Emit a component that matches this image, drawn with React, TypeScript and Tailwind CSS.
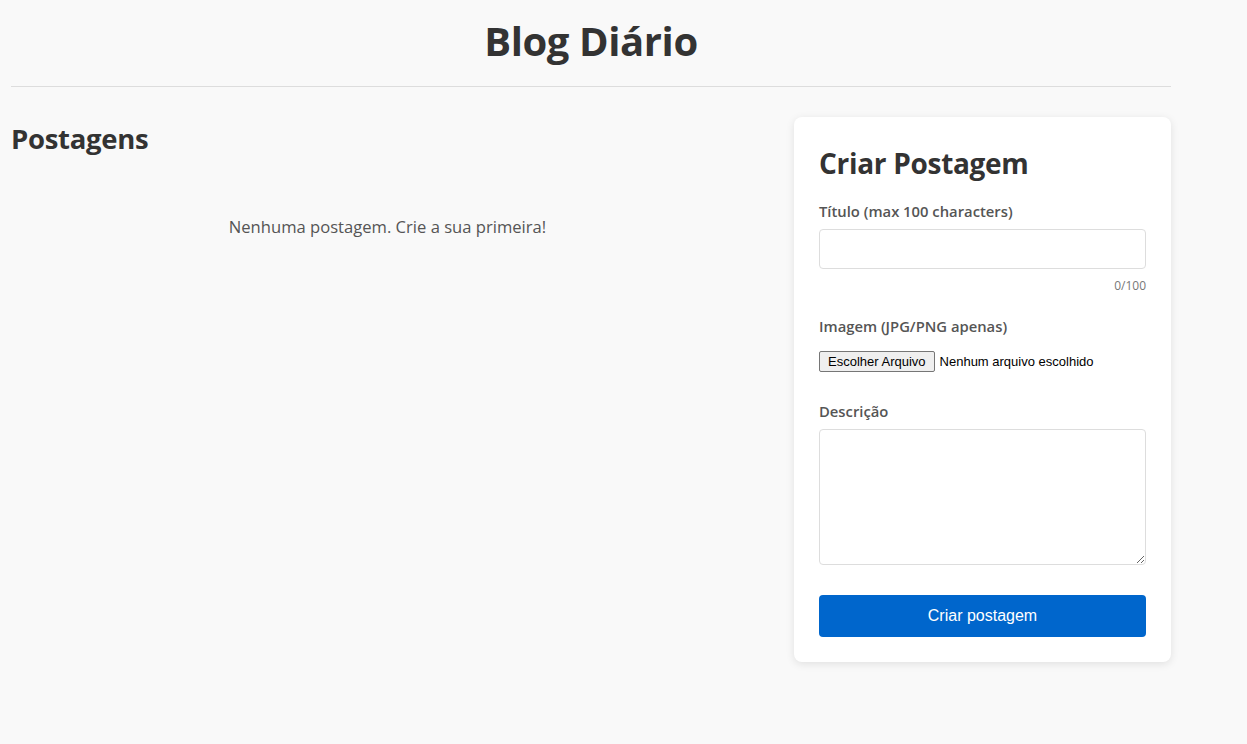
import { useState } from "react";

export default function App() {
  const [title, setTitle] = useState("");
  const [desc, setDesc] = useState("");

  return (
    <div className="min-h-[744px] bg-[#f9f9f9] text-[#333] font-['Open_Sans',sans-serif]">
      <div className="ml-[11px] w-[1160px]">
        <header className="border-b border-[#ddd] h-[87px] flex items-center justify-center">
          <h1 className="text-[40px] font-bold leading-none tracking-[-0.4px] pb-[4px]">Blog Diário</h1>
        </header>

        <div className="flex gap-[30px] pt-[30px]">
          <section className="w-[753px]">
            <h2 className="text-[27.5px] font-bold leading-none mt-[8px] tracking-[-0.3px]">Postagens</h2>
            <p className="mt-[62px] text-center text-[16.6px] text-[#555]">Nenhuma postagem. Crie a sua primeira!</p>
          </section>

          <aside className="w-[377px] bg-white rounded-[8px] shadow-[0_2px_8px_rgba(0,0,0,0.1)] px-[25px] pt-[32px] pb-[25px]">
            <h2 className="text-[28px] font-bold leading-none tracking-[-0.3px]">Criar Postagem</h2>

            <form className="mt-[24px]" onSubmit={(e) => e.preventDefault()}>
              <label className="block text-[14.8px] font-semibold text-[#555] leading-[20px]">Título (max 100 characters)</label>
              <input
                value={title}
                maxLength={100}
                onChange={(e) => setTitle(e.target.value)}
                className="mt-[8px] block w-full h-[40px] border border-[#ddd] rounded-[4px] bg-white px-[10px] outline-none"
              />
              <div className="mt-[9px] text-right text-[12px] text-[#777] leading-[16px]">{title.length}/100</div>

              <label className="mt-[22px] block text-[14.8px] font-semibold text-[#555] leading-[20px]">Imagem (JPG/PNG apenas)</label>
              <div className="mt-[15px] flex items-center gap-[5px] font-['Liberation_Sans',sans-serif] text-[13px] text-black">
                <span className="h-[21px] px-[8px] flex items-center border border-[#767676] rounded-[2px] bg-[#efefef]">Escolher Arquivo</span>
                <span>Nenhum arquivo escolhido</span>
              </div>

              <label className="mt-[29px] block text-[14.8px] font-semibold text-[#555] leading-[20px]">Descrição</label>
              <textarea
                value={desc}
                onChange={(e) => setDesc(e.target.value)}
                className="mt-[8px] block w-full h-[136px] border border-[#ddd] rounded-[4px] bg-white p-[10px] outline-none"
              />

              <button
                type="submit"
                className="mt-[30px] w-full h-[42px] rounded-[4px] bg-[#0066cc] text-white text-[16px] font-['Liberation_Sans',sans-serif]"
              >
                Criar postagem
              </button>
            </form>
          </aside>
        </div>
      </div>
    </div>
  );
}
